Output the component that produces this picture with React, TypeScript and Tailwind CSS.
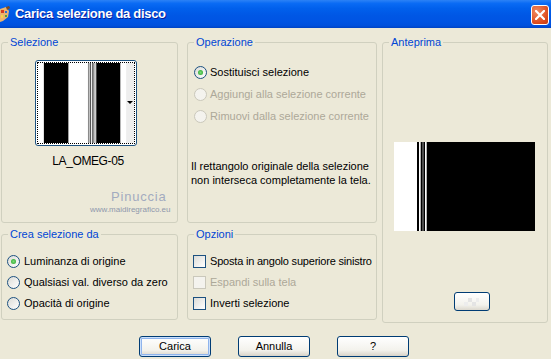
import React from 'react';

const Radio: React.FC<{ checked?: boolean; disabled?: boolean }> = ({ checked, disabled }) => (
  <span
    className={`flex w-[13px] h-[13px] shrink-0 items-center justify-center rounded-full border ${
      disabled
        ? 'border-[#CAC8BB] bg-[#F4F3EE]'
        : 'border-[#1C5180] bg-[linear-gradient(135deg,#DCDCD7,#FFFFFF)]'
    }`}
  >
    {checked && <span className="w-[5px] h-[5px] rounded-full bg-[radial-gradient(circle,#7ADB7A,#21A121)]" />}
  </span>
);

const Check: React.FC<{ disabled?: boolean }> = ({ disabled }) => (
  <span
    className={`block w-[13px] h-[13px] shrink-0 border ${
      disabled
        ? 'border-[#CAC8BB] bg-[#F4F3EE]'
        : 'border-[#1C5180] bg-[linear-gradient(135deg,#DCDCD7,#FFFFFF)]'
    }`}
  />
);

const Group: React.FC<{ label: string; className?: string; children?: React.ReactNode }> = ({ label, className = '', children }) => (
  <div className={`relative rounded-[3px] border border-[#D0D0BF] ${className}`}>
    <span className="absolute -top-[7px] left-[6px] bg-[#ECE9D8] px-[2px] leading-[13px] text-[#0046D5]">
      {label}
    </span>
    {children}
  </div>
);

const XpButton: React.FC<{ label: string; isDefault?: boolean }> = ({ label, isDefault }) => (
  <button
    className={`w-[72px] h-[21px] rounded-[3px] border border-[#003C74] bg-[linear-gradient(to_bottom,#FFFFFF,#F3F2EC_70%,#D8D3C8)] text-[11px] leading-none text-black ${
      isDefault ? 'shadow-[inset_0_0_0_1px_#CCE0FB,inset_0_0_0_2px_#8FB4EC]' : ''
    }`}
  >
    {label}
  </button>
);

export default function App() {
  return (
    <div className="relative w-[551px] h-[359px] overflow-hidden bg-[#ECE9D8] font-['Liberation_Sans',Arial,sans-serif] text-[11px] text-black">
      {/* Title bar */}
      <div className="flex h-[28px] items-center bg-[linear-gradient(to_bottom,#2C82F6_0%,#0A6BF4_12%,#0160EC_30%,#0057E5_55%,#0054E3_78%,#0050DC_92%,#0043C4_100%)]">
        <svg width="10" height="17" viewBox="0 0 10 17" className="shrink-0">
          <path d="M0 3 L6 1 L9 5 L8 11 L3 15 L0 16 Z" fill="#E9B270" />
          <rect x="1" y="4" width="3" height="3" fill="#D33B21" />
          <rect x="5" y="5" width="2" height="2" fill="#2C6BD9" />
          <rect x="1" y="9" width="2" height="3" fill="#F6D24A" />
          <rect x="5" y="9" width="2" height="2" fill="#47A33A" />
          <path d="M6 1 L9 0 L10 2 L7 4 Z" fill="#7B4A22" />
        </svg>
        <span className="ml-[5px] text-[13px] font-bold tracking-[-0.3px] text-white [text-shadow:1px_1px_0_#0A1E9C]">
          Carica selezione da disco
        </span>
        <div className="ml-auto mr-[2px] mt-[1px] flex w-[18px] h-[20px] items-center justify-center rounded-[3px] border border-white bg-[radial-gradient(circle_at_30%_30%,#F08A62,#DC4A1C_70%,#C23A10)]">
          <svg width="10" height="10" viewBox="0 0 10 10">
            <path d="M1 1 L9 9 M9 1 L1 9" stroke="white" strokeWidth="2.2" strokeLinecap="square" />
          </svg>
        </div>
      </div>

      {/* Panels */}
      <div className="ml-[1px] mt-[14px] flex items-start">
        <div className="flex w-[177px] flex-col">
          <Group label="Selezione" className="h-[181px]">
            <div className="pl-[33px] pt-[17px]">
              <div className="relative w-[102px] h-[86px] rounded-[3px] border border-[#1C5180] bg-white p-[1px]">
                <div className="h-full w-full border border-dotted border-black">
                  <svg width="98" height="82" viewBox="0 0 98 82" preserveAspectRatio="none" className="block h-full w-full">
                    <rect x="0" y="0" width="98" height="82" fill="#FFFFFF" />
                    <rect x="6" y="0" width="25" height="82" fill="#000000" />
                    <rect x="51" y="0" width="1.5" height="82" fill="#8A8A8A" />
                    <rect x="53" y="0" width="1" height="82" fill="#444444" />
                    <rect x="55" y="0" width="2" height="82" fill="#707070" />
                    <rect x="57" y="0" width="2" height="82" fill="#C0C0C0" />
                    <rect x="59.5" y="0" width="24.5" height="82" fill="#000000" />
                    <rect x="90" y="0" width="8" height="82" fill="#EEEEEE" />
                  </svg>
                </div>
                <span className="absolute right-[3px] top-[40px] h-0 w-0 border-x-[3px] border-t-[3px] border-x-transparent border-t-black" />
              </div>
              <div className="mt-[8px] w-[106px] text-center text-[12px] leading-[14px] tracking-[-0.4px]">LA_OMEG-05</div>
            </div>
          </Group>
          <Group label="Crea selezione da" className="mt-[11px] h-[86px]">
            <div className="pl-[5px] pt-[16px] whitespace-nowrap">
              <div className="flex h-[21px] items-center gap-[4px]">
                <Radio checked />
                <span>Luminanza di origine</span>
              </div>
              <div className="flex h-[21px] items-center gap-[4px]">
                <Radio />
                <span>Qualsiasi val. diverso da zero</span>
              </div>
              <div className="flex h-[21px] items-center gap-[4px]">
                <Radio />
                <span>Opacità di origine</span>
              </div>
            </div>
          </Group>
        </div>

        <div className="ml-[9px] flex w-[190px] flex-col">
          <Group label="Operazione" className="h-[181px]">
            <div className="pl-[6px] pt-[18px] whitespace-nowrap">
              <div className="flex h-[22px] items-center gap-[3px]">
                <Radio checked />
                <span>Sostituisci selezione</span>
              </div>
              <div className="flex h-[22px] items-center gap-[3px] text-[#ACA899]">
                <Radio disabled />
                <span>Aggiungi alla selezione corrente</span>
              </div>
              <div className="flex h-[22px] items-center gap-[3px] text-[#ACA899]">
                <Radio disabled />
                <span>Rimuovi dalla selezione corrente</span>
              </div>
            </div>
            <p className="mt-[32px] pl-[3px] leading-[14px] whitespace-nowrap">
              Il rettangolo originale della selezione
              <br />
              non interseca completamente la tela.
            </p>
          </Group>
          <Group label="Opzioni" className="mt-[11px] h-[86px]">
            <div className="pl-[5px] pt-[16px] whitespace-nowrap">
              <div className="flex h-[21px] items-center gap-[4px]">
                <Check />
                <span className="tracking-[-0.2px]">Sposta in angolo superiore sinistro</span>
              </div>
              <div className="flex h-[21px] items-center gap-[4px] text-[#ACA899]">
                <Check disabled />
                <span>Espandi sulla tela</span>
              </div>
              <div className="flex h-[21px] items-center gap-[4px]">
                <Check />
                <span>Inverti selezione</span>
              </div>
            </div>
          </Group>
        </div>

        <Group label="Anteprima" className="ml-[5px] h-[281px] w-[166px]">
          <div className="pl-[11px] pt-[99px]">
            <svg width="141" height="89" viewBox="0 0 141 89" className="block">
              <rect x="0" y="0" width="141" height="89" fill="#FFFFFF" />
              <rect x="23" y="0" width="2" height="89" fill="#000000" />
              <rect x="26.7" y="0" width="2" height="89" fill="#000000" />
              <rect x="29.3" y="0" width="1.7" height="89" fill="#000000" />
              <rect x="32.7" y="0" width="108.3" height="89" fill="#000000" />
            </svg>
            <div className="ml-[60px] mt-[61px] flex w-[36px] h-[19px] items-center justify-center rounded-[3px] border border-[#003C74] bg-[linear-gradient(to_bottom,#FFFFFF,#F3F2EC_70%,#DCD8CE)]">
              <svg width="16" height="10" viewBox="0 0 16 10">
                <rect x="4" y="1" width="4" height="4" fill="#E4E4E4" />
                <rect x="8" y="5" width="4" height="4" fill="#E4E4E4" />
                <rect x="12" y="1" width="3" height="4" fill="#EDEDED" />
                <rect x="0" y="5" width="4" height="4" fill="#EDEDED" />
              </svg>
            </div>
          </div>
        </Group>
      </div>

      {/* Watermark */}
      <span className="absolute left-[111px] top-[190px] text-[13px] leading-[14px] tracking-[0.8px] text-[#A3ABBF]">Pinuccia</span>
      <span className="absolute left-[90px] top-[205px] text-[8px] leading-[10px] text-[#8F98AC]">www.maidiregrafico.eu</span>

      {/* Buttons */}
      <div className="mt-[13px] flex gap-[27px] pl-[139px]">
        <XpButton label="Carica" isDefault />
        <XpButton label="Annulla" />
        <XpButton label="?" />
      </div>
    </div>
  );
}
